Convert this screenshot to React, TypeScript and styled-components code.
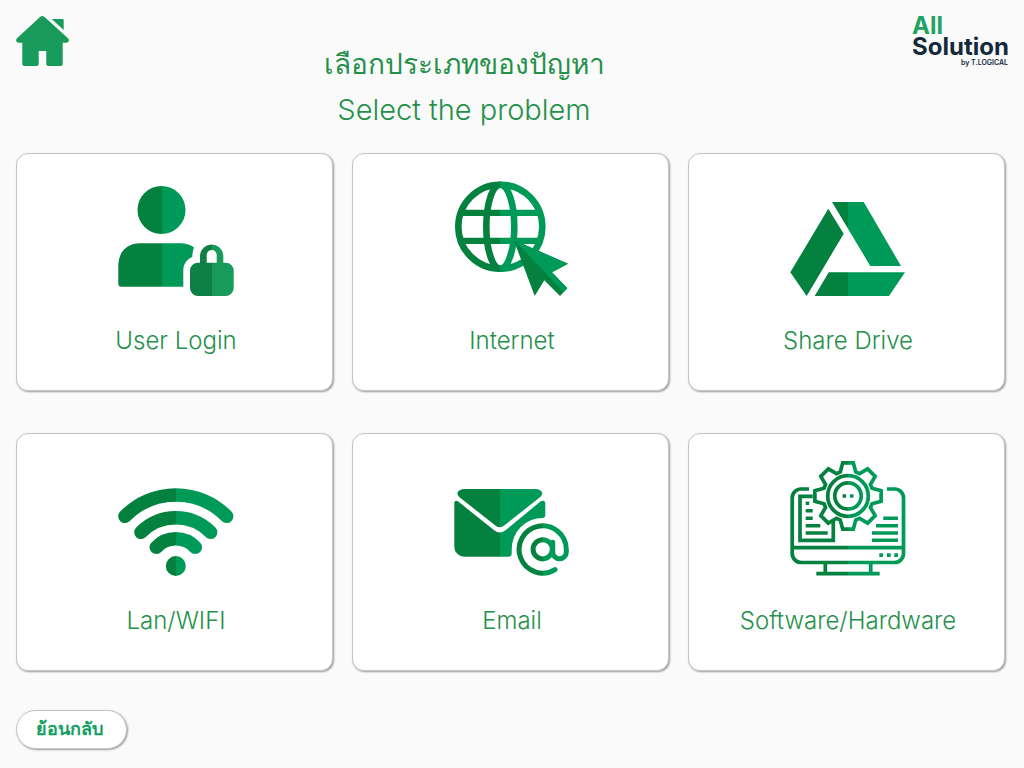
import React from "react";
import styled, { createGlobalStyle } from "styled-components";

const GlobalStyle = createGlobalStyle`
  * { box-sizing: border-box; }
  body {
    margin: 0;
    background: #fafafa;
    font-family: Inter, "Noto Sans", "Liberation Sans", sans-serif;
  }
`;

const Page = styled.div`
  padding: 16px;
`;

const Header = styled.header`
  display: grid;
  grid-template-columns: 1fr 96px;
  align-items: start;
  margin-bottom: 20px;
`;

const HomeLink = styled.a`
  grid-area: 1 / 1;
  justify-self: start;
  display: block;
  line-height: 0;
`;

const Title = styled.h1`
  grid-area: 1 / 1;
  margin: 0;
  padding-top: 25px;
  text-align: center;
  font-size: 29px;
  line-height: 46px;
  font-weight: 300;
  color: #24904a;
`;

const TitleLine = styled.span`
  display: block;

  &:lang(th) {
    font-size: 28px;
  }
`;

const Logo = styled.div`
  display: flex;
  flex-direction: column;
  color: #14293a;
  white-space: nowrap;
`;

const LogoTop = styled.span`
  font-size: 24px;
  line-height: 20px;
  font-weight: 700;
  color: #20a464;
`;

const LogoName = styled.span`
  font-size: 24px;
  line-height: 22px;
  font-weight: 700;
`;

const LogoBy = styled.span`
  align-self: flex-end;
  font-size: 7px;
  line-height: 10px;
  font-weight: 600;
`;

const Grid = styled.main`
  display: grid;
  grid-template-columns: repeat(3, 1fr);
  gap: 42px 19px;
  padding-right: 3px;
`;

const Card = styled.button`
  display: flex;
  flex-direction: column;
  align-items: center;
  gap: 28px;
  padding: 26px 0 32px 3px;
  border: 1px solid #c4c4c4;
  border-radius: 12px;
  background: #fff;
  box-shadow: 1px 1px 2px #9c9c9c;
  font-family: inherit;
  cursor: pointer;
`;

const Label = styled.span`
  font-size: 24px;
  line-height: 34px;
  font-weight: 300;
  color: #24904a;
`;

const BackButton = styled.button`
  display: block;
  margin-top: 39px;
  padding: 0 23px 2px 19px;
  height: 39px;
  border: 1px solid #c4c4c4;
  border-radius: 20px;
  background: #fff;
  box-shadow: 1px 1px 2px #9c9c9c;
  font-family: inherit;
  font-size: 18px;
  font-weight: 600;
  color: #14a062;
  cursor: pointer;
`;

const DARK = "#04803f";
const LIGHT = "#009a58";

function Split({ id, at, dark = DARK, light = LIGHT }: { id: string; at: number; dark?: string; light?: string }) {
  return (
    <linearGradient id={id} gradientUnits="userSpaceOnUse" x1="0" y1="0" x2="116" y2="0">
      <stop offset={at / 116} stopColor={dark} />
      <stop offset={at / 116} stopColor={light} />
    </linearGradient>
  );
}

function Icon({ children }: { children: React.ReactNode }) {
  return (
    <svg width="116" height="116" viewBox="0 0 116 116" fill="none" aria-hidden="true">
      {children}
    </svg>
  );
}

function UserIcon() {
  return (
    <Icon>
      <defs>
        <Split id="user" at={43.7} />
        <Split id="lock" at={93.7} dark="#0f8045" light="#189a5a" />
      </defs>
      <circle cx="43.5" cy="30" r="24" fill="url(#user)" />
      <path d="M22 63.3H63.7Q71 63.8 76 67.4Q74.3 71 74.3 76.7Q65.3 81 65.3 90V106.7H3.3Q.3 106.7 .3 103.7V86C.3 72 9 63.3 22 63.3Z" fill="url(#user)" />
      <path fillRule="evenodd" d="M82 82.7V75A11.7 11.7 0 0 1 105.3 75V82.7H107.7A8 8 0 0 1 115.7 90.7V108.3A8 8 0 0 1 107.7 116H80A8 8 0 0 1 72 108.3V90.7A8 8 0 0 1 80 82.7ZM88.7 82.7H98.7V75A5 5 0 0 0 88.7 75Z" fill="url(#lock)" />
    </Icon>
  );
}

function GlobeIcon() {
  return (
    <Icon>
      <defs>
        <Split id="globe" at={46.3} />
      </defs>
      <g stroke="url(#globe)" strokeWidth="6.6">
        <circle cx="46.3" cy="46.7" r="42" />
        <ellipse cx="46.3" cy="46.7" rx="14" ry="42" />
      </g>
      <path d="M6 29.7H87V36H6ZM6 57.7H87V64H6Z" fill="url(#globe)" />
      <path d="M59.7 60L114 83.7L98 92.3L113.3 108.3L106 116L90.3 100.3L80.7 116Z" fill={DARK} />
      <path d="M59.7 60L114 83.7L98 92.3L113.3 108.3L109.7 112Z" fill={LIGHT} />
    </Icon>
  );
}

function DriveIcon() {
  return (
    <Icon>
      <defs>
        <Split id="drive" at={58} />
      </defs>
      <path d="M42 22H73.7L111 86H80.3ZM38.3 28.7L53.7 53.7L16.7 116L.3 92.3ZM38.7 92.3H115L99 116H24.7Z" fill="url(#drive)" />
    </Icon>
  );
}

function WifiIcon() {
  return (
    <Icon>
      <defs>
        <Split id="wifi" at={58} />
      </defs>
      <g stroke="url(#wifi)" strokeWidth="13.6" strokeLinecap="round">
        <path d="M7 56.3A71.2 71.2 0 0 1 108.6 56.3" />
        <path d="M23 72.3A49 49 0 0 1 92.6 72.3" />
        <path d="M38.3 87.3A26.6 26.6 0 0 1 77.3 87.3" />
      </g>
      <circle cx="57.8" cy="106" r="10" fill="url(#wifi)" />
    </Icon>
  );
}

function EmailIcon() {
  return (
    <Icon>
      <defs>
        <Split id="mail" at={46} />
        <Split id="at" at={89} />
      </defs>
      <path d="M10.5 29H81.5Q86.5 29 88.3 33Q88.2 35.3 86.3 37L49.5 66Q45.8 68.6 42 66L5.2 37Q3.4 35.3 3.3 33Q5.3 29 10.5 29Z" fill="url(#mail)" />
      <path d="M.3 43Q.3 40.7 2.3 40.7Q3.3 40.7 4.3 41.6L40.5 70.6Q45.8 74.5 51.2 70.6L86.3 41.6Q88 40.5 89.3 40.7Q91.3 41 91.3 43V55.5Q91.2 57.7 88.7 58A31 31 0 0 0 57.7 89V94.3Q57.5 96.7 55 96.7H10.3A10 10 0 0 1 .3 86.7Z" fill="url(#mail)" />
      <g stroke="url(#at)" strokeWidth="5" strokeLinecap="round">
        <path d="M101 109.6A23.6 23.6 0 1 1 112.3 89.3V92A6.8 6.8 0 0 1 98.7 92V82.3" />
        <circle cx="88.7" cy="89.3" r="9.6" />
      </g>
    </Icon>
  );
}

const gearOutline = Array.from({ length: 8 }, (_, tooth) => {
  const a = (tooth * Math.PI) / 4;
  return [[-7.7, -24], [-5.3, -33.1], [5.3, -33.1], [7.7, -24]]
    .map(([x, y]) => `${58 + x * Math.cos(a) - y * Math.sin(a)},${36 + x * Math.sin(a) + y * Math.cos(a)}`)
    .join(" ");
}).join(" ");

function ComputerIcon() {
  return (
    <Icon>
      <defs>
        <Split id="computer" at={58} />
      </defs>
      <g stroke="url(#computer)" strokeWidth="3.7">
        <path d="M19 29H11A8.8 8.8 0 0 0 2.2 37.8V93.5A9 9 0 0 0 11.2 102.5H104.5A9 9 0 0 0 113.5 93.5V37.8A8.8 8.8 0 0 0 104.7 29H97" />
        <path d="M35.3 102V113M80.7 102V113" />
        <path d="M22.7 36.3H10V80.3H43.3V60.7" />
        <polygon points={gearOutline} />
        <circle cx="58" cy="36" r="20.3" />
        <circle cx="58" cy="36" r="13.2" />
      </g>
      <path
        fill="url(#computer)"
        d="M2 85.8H114V89.5H2ZM26.3 111.8H89.7V115.5H26.3ZM15.7 41.6H19.2V45.1H15.7ZM15.7 49H22.7V52.5H15.7ZM15.7 56.5H22.7V60H15.7ZM15.7 63.9H30.3V67.4H15.7ZM15.7 71.3H37.7V74.8H15.7ZM93.3 56.5H108V60H93.3ZM86 63.9H108V67.4H86ZM82 71.3H108V74.8H82ZM82 78.6H108V82.1H82ZM89.3 93.3H93V97H89.3ZM97 93.3H100.7V97H97ZM104.3 93.3H108V97H104.3ZM52.6 34.2H56.1V37.7H52.6ZM60 34.2H63.5V37.7H60Z"
      />
    </Icon>
  );
}

function HomeIcon() {
  return (
    <svg width="53" height="51" viewBox="0 0 53 51" fill="#189a5a" aria-hidden="true">
      <path d="M24.6 .6Q26.3 -.5 28 .6L52 22.2Q53.3 23.7 52.7 25.2Q52 26.8 50 26.8H46.7V48Q46.7 50 44.7 50H32.3Q30.3 50 30.3 48V35H22.7V48Q22.7 50 20.7 50H8.3Q6.3 50 6.3 48V26.8H3Q1 26.8 .3 25.2Q-.3 23.7 1 22.2Z" />
      <path d="M35.7 3H46.3Q47.7 3 47.7 4.4V14Z" />
    </svg>
  );
}

const problems = [
  { label: "User Login", Picture: UserIcon },
  { label: "Internet", Picture: GlobeIcon },
  { label: "Share Drive", Picture: DriveIcon },
  { label: "Lan/WIFI", Picture: WifiIcon },
  { label: "Email", Picture: EmailIcon },
  { label: "Software/Hardware", Picture: ComputerIcon },
];

export default function App() {
  return (
    <Page>
      <GlobalStyle />
      <Header>
        <HomeLink href="#" aria-label="Home">
          <HomeIcon />
        </HomeLink>
        <Title>
          <TitleLine lang="th">เลือกประเภทของปัญหา</TitleLine>
          <TitleLine>Select the problem</TitleLine>
        </Title>
        <Logo>
          <LogoTop>All</LogoTop>
          <LogoName>Solution</LogoName>
          <LogoBy>by T.LOGICAL</LogoBy>
        </Logo>
      </Header>
      <Grid>
        {problems.map(({ label, Picture }) => (
          <Card key={label} type="button">
            <Picture />
            <Label>{label}</Label>
          </Card>
        ))}
      </Grid>
      <BackButton type="button" lang="th">ย้อนกลับ</BackButton>
    </Page>
  );
}
